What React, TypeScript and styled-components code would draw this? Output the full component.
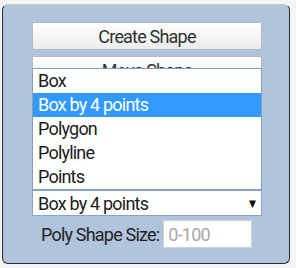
import styled, { createGlobalStyle } from "styled-components";

const Global = createGlobalStyle`
  html, body {
    margin: 0;
    padding: 0;
    background: #f4f4f4;
  }
  body {
    font-family: "Roboto", "DejaVu Sans Condensed", sans-serif;
    letter-spacing: -0.8px;
  }
`;

const Panel = styled.div`
  position: relative;
  box-sizing: border-box;
  width: 288px;
  height: 260px;
  margin: 4px 0 0 2px;
  padding: 17px 0 0 29px;
  background: #b0c4de;
  border: 1px solid #2b2b2b;
  border-top-color: #c8c8c8;
  border-radius: 6px;
  display: flex;
  flex-direction: column;
  gap: 6px;
`;

const Button = styled.button`
  box-sizing: border-box;
  width: 230px;
  height: 28px;
  padding: 0;
  border: 1px solid #b9b9b9;
  background: linear-gradient(#ffffff, #ececec);
  color: #2a332c;
  font-family: inherit;
  letter-spacing: inherit;
  font-size: 18px;
  text-align: center;
`;

const Spacer = styled.div`
  height: 94px;
`;

const SelectWrap = styled.div`
  position: relative;
  width: 230px;
`;

const SelectBox = styled.div`
  box-sizing: border-box;
  height: 26px;
  padding: 0 6px 0 5px;
  background: #fff;
  border: 1px solid #86a2cf;
  display: flex;
  align-items: center;
  justify-content: space-between;
  font-size: 18px;
  color: #1c1c1c;
`;

const Arrow = styled.span`
  font-size: 10px;
  color: #111;
`;

const Popup = styled.ul`
  position: absolute;
  left: 0;
  right: 0;
  bottom: 100%;
  box-sizing: border-box;
  margin: 0;
  padding: 0;
  list-style: none;
  background: #fff;
  border: 1px solid #8a9db8;
`;

const Option = styled.li<{ $active?: boolean }>`
  height: 24px;
  line-height: 24px;
  padding-left: 5px;
  font-size: 18px;
  color: ${(p) => (p.$active ? "#fff" : "#1c1c1c")};
  background: ${(p) => (p.$active ? "#3399ff" : "transparent")};
`;

const SizeRow = styled.div`
  display: flex;
  align-items: center;
  margin-top: -2px;
  padding-left: 9px;
  gap: 4px;
`;

const Label = styled.label`
  font-size: 18px;
  color: #222;
`;

const Input = styled.input`
  box-sizing: border-box;
  width: 89px;
  height: 28px;
  padding: 0 4px;
  border: 1px solid #d0d0d0;
  background: #fff;
  font-family: inherit;
  letter-spacing: inherit;
  font-size: 18px;
  outline: none;

  &::placeholder {
    color: #a8a8a8;
  }
`;

const options = ["Box", "Box by 4 points", "Polygon", "Polyline", "Points"];

export default function App() {
  return (
    <>
      <Global />
      <Panel>
        <Button>Create Shape</Button>
        <Button>Move Shape</Button>
        <Spacer />
        <SelectWrap>
          <Popup>
            {options.map((o) => (
              <Option key={o} $active={o === "Box by 4 points"}>
                {o}
              </Option>
            ))}
          </Popup>
          <SelectBox>
            <span>Box by 4 points</span>
            <Arrow>▼</Arrow>
          </SelectBox>
        </SelectWrap>
        <SizeRow>
          <Label>Poly Shape Size:</Label>
          <Input placeholder="0-100" />
        </SizeRow>
      </Panel>
    </>
  );
}
